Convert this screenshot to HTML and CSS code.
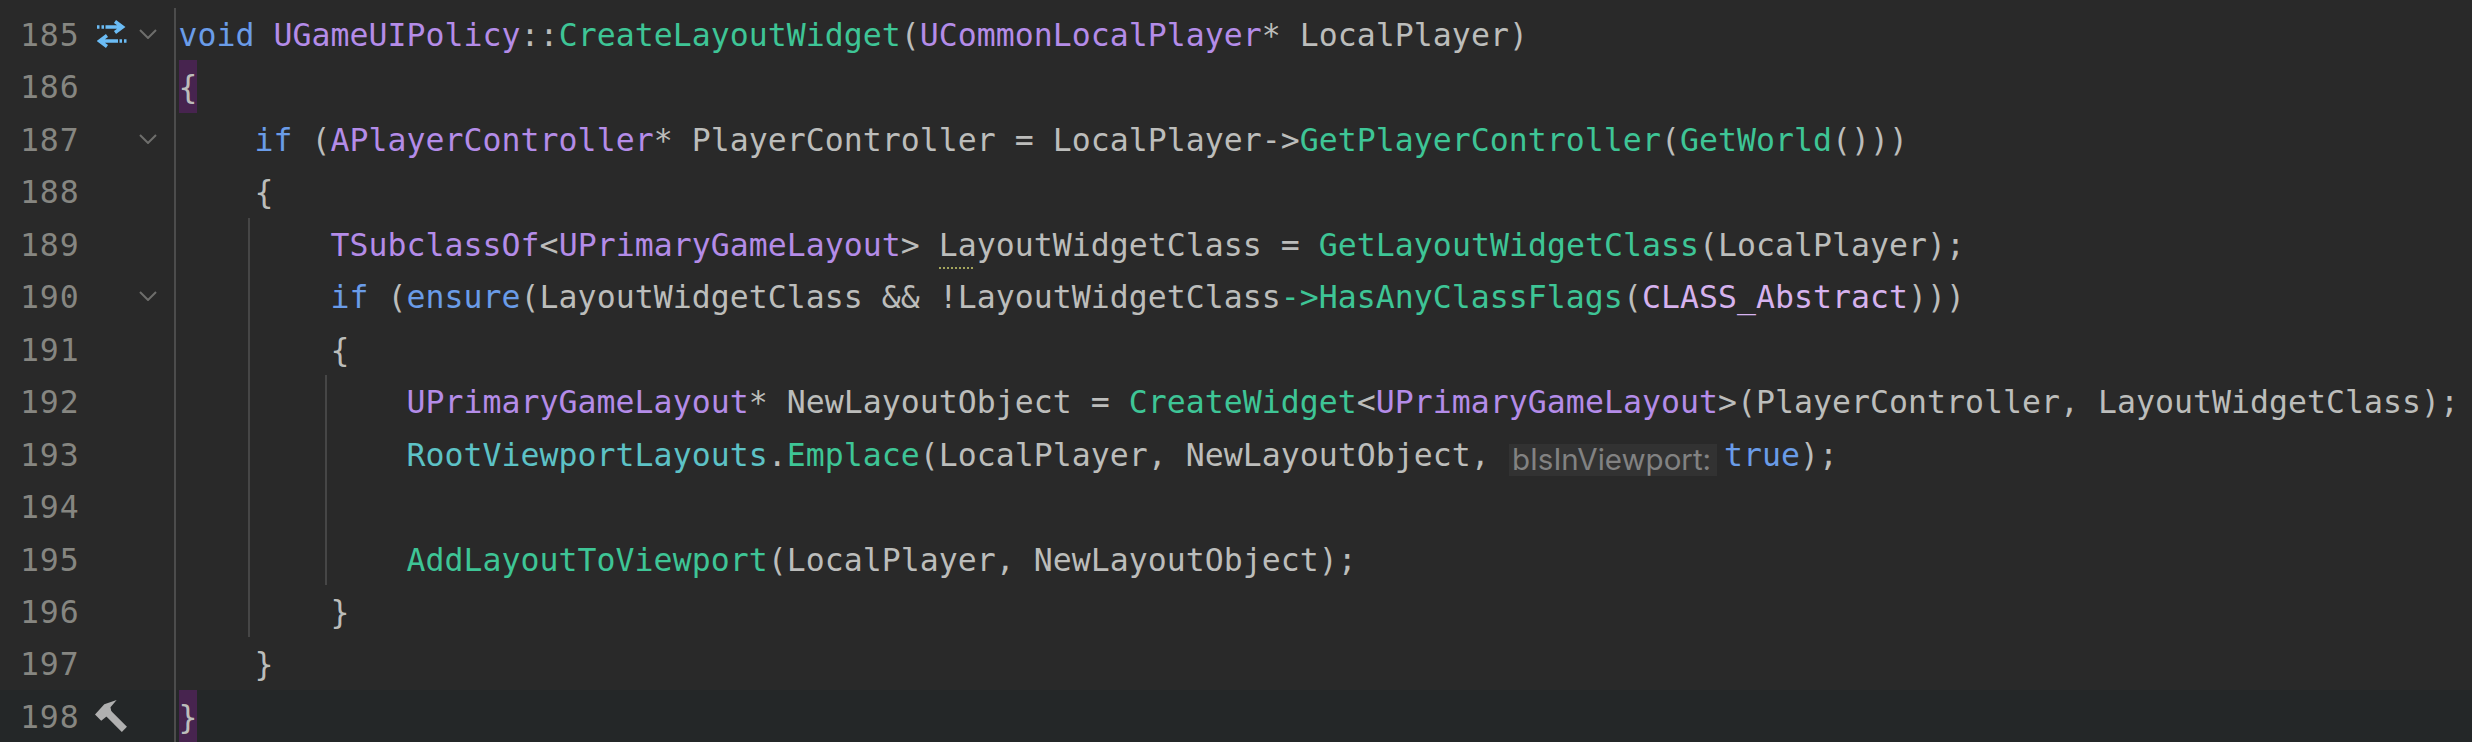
FILE: index.html
```html
<!DOCTYPE html>
<html lang="en">
<head>
<meta charset="utf-8">
<title>UGameUIPolicy</title>
<link rel="stylesheet" href="styles.css">
</head>
<body>
<main class="editor">
  <div class="row">
    <div class="gutter"><span class="num">185</span>
      <span class="mark"><svg class="mark-svg" viewBox="0 0 30 28"><path class="arrow" d="M0 7h2.500M4.500 7h2.500M8.500 7H25M18 1.500l7.500 5.500-7.500 5.500"/><path class="arrow" d="M29.500 21h-2.500M25 21h-2.500M21 21H3M10 15.500l-7.500 5.500 7.500 5.500"/></svg></span>
      <span class="fold"><svg class="fold-svg" viewBox="0 0 18 10"><path class="chev" d="M1 1l8 8 8-8"/></svg></span></div>
    <div class="code"><span class="kw">void</span> <span class="cl">UGameUIPolicy</span>::<span class="fn">CreateLayoutWidget</span>(<span class="cl">UCommonLocalPlayer</span>* LocalPlayer)</div>
  </div>
  <div class="row">
    <div class="gutter"><span class="num">186</span><span class="mark"></span><span class="fold"></span></div>
    <div class="code"><span class="hl">{</span></div>
  </div>
  <div class="row">
    <div class="gutter"><span class="num">187</span><span class="mark"></span>
      <span class="fold"><svg class="fold-svg" viewBox="0 0 18 10"><path class="chev" d="M1 1l8 8 8-8"/></svg></span></div>
    <div class="code">    <span class="kw">if</span> (<span class="cl">APlayerController</span>* PlayerController = LocalPlayer-&gt;<span class="fn">GetPlayerController</span>(<span class="fn">GetWorld</span>()))</div>
  </div>
  <div class="row">
    <div class="gutter"><span class="num">188</span><span class="mark"></span><span class="fold"></span></div>
    <div class="code">    {</div>
  </div>
  <div class="row">
    <div class="gutter"><span class="num">189</span><span class="mark"></span><span class="fold"></span></div>
    <div class="code g1">        <span class="cl">TSubclassOf</span>&lt;<span class="cl">UPrimaryGameLayout</span>&gt; <span class="weak">La</span>youtWidgetClass = <span class="fn">GetLayoutWidgetClass</span>(LocalPlayer);</div>
  </div>
  <div class="row">
    <div class="gutter"><span class="num">190</span><span class="mark"></span>
      <span class="fold"><svg class="fold-svg" viewBox="0 0 18 10"><path class="chev" d="M1 1l8 8 8-8"/></svg></span></div>
    <div class="code g1">        <span class="kw">if</span> (<span class="kw">ensure</span>(LayoutWidgetClass &amp;&amp; !LayoutWidgetClass<span class="fn">-&gt;HasAnyClassFlags</span>(<span class="mc">CLASS_Abstract</span>)))</div>
  </div>
  <div class="row">
    <div class="gutter"><span class="num">191</span><span class="mark"></span><span class="fold"></span></div>
    <div class="code g1">        {</div>
  </div>
  <div class="row">
    <div class="gutter"><span class="num">192</span><span class="mark"></span><span class="fold"></span></div>
    <div class="code g2">            <span class="cl">UPrimaryGameLayout</span>* NewLayoutObject = <span class="fn">CreateWidget</span>&lt;<span class="cl">UPrimaryGameLayout</span>&gt;(PlayerController, LayoutWidgetClass);</div>
  </div>
  <div class="row">
    <div class="gutter"><span class="num">193</span><span class="mark"></span><span class="fold"></span></div>
    <div class="code g2">            <span class="fd">RootViewportLayouts</span>.<span class="fn">Emplace</span>(LocalPlayer, NewLayoutObject, <span class="hint">bIsInViewport:</span><span class="kw">true</span>);</div>
  </div>
  <div class="row">
    <div class="gutter"><span class="num">194</span><span class="mark"></span><span class="fold"></span></div>
    <div class="code g2"></div>
  </div>
  <div class="row">
    <div class="gutter"><span class="num">195</span><span class="mark"></span><span class="fold"></span></div>
    <div class="code g2">            <span class="fn">AddLayoutToViewport</span>(LocalPlayer, NewLayoutObject);</div>
  </div>
  <div class="row">
    <div class="gutter"><span class="num">196</span><span class="mark"></span><span class="fold"></span></div>
    <div class="code g1">        }</div>
  </div>
  <div class="row">
    <div class="gutter"><span class="num">197</span><span class="mark"></span><span class="fold"></span></div>
    <div class="code">    }</div>
  </div>
  <div class="row current">
    <div class="gutter"><span class="num">198</span>
      <span class="mark"><svg class="hammer" viewBox="0 0 32 32"><path class="hammer-head" d="M0 14L9 4L21 0L15 7L16 12L6 20Z"/><path class="hammer-handle" d="M13 13L28.500 28.500"/></svg></span>
      <span class="fold"></span></div>
    <div class="code"><span class="hl">}</span></div>
  </div>
</main>
</body>
</html>
```
FILE: styles.css
```css
* {
  box-sizing: border-box;
}

html,
body {
  margin: 0;
  height: 100%;
  background: #292929;
  overflow: hidden;
}

.editor {
  padding-top: 8px;
  height: 742px;
  font-family: "DejaVu Sans Mono", "Liberation Mono", monospace;
  font-size: 31.5px;
  letter-spacing: 0.04px;
  color: #bcbdbb;
}

.row {
  display: flex;
  height: 52.46px;
  line-height: 52.46px;
}

.row.current {
  background: #242728;
}

.gutter {
  display: flex;
  align-items: center;
  flex: none;
  width: 176px;
  padding-left: 20px;
  border-right: 2px solid #4c4c4c;
}

.num {
  width: 60px;
  padding-top: 2px;
  color: #868681;
  letter-spacing: 0.9px;
}

.mark {
  display: flex;
  width: 30px;
  margin-left: 16px;
  margin-right: 13px;
}

.mark-svg {
  flex: none;
  width: 30px;
  height: 28px;
  margin-left: 1px;
}

.arrow {
  fill: none;
  stroke: #6bbcf5;
  stroke-width: 3.5;
}

.fold {
  display: flex;
  width: 18px;
}

.fold-svg {
  width: 18px;
  height: 10px;
}

.chev {
  fill: none;
  stroke: #6e6e6c;
  stroke-width: 2;
}

.hammer {
  flex: none;
  width: 33px;
  height: 33px;
  margin-left: -1px;
}

.hammer-head {
  fill: #b0b0b0;
}

.hammer-handle {
  stroke: #b0b0b0;
  stroke-width: 7;
}

.code {
  flex: 1;
  padding-left: 2.5px;
  line-height: 54.46px;
  white-space: pre;
  background-repeat: no-repeat;
}

.g1 {
  background-image: linear-gradient(#464646, #464646);
  background-position: 72px 0;
  background-size: 2px 100%;
}

.g2 {
  background-image: linear-gradient(#464646, #464646), linear-gradient(#464646, #464646);
  background-position: 72px 0, 149px 0;
  background-size: 2px 100%, 2px 100%;
}

.kw {
  color: #6a9ce8;
}

.cl {
  color: #b48ce8;
}

.fn {
  color: #3ec596;
}

.fd {
  color: #5dc2c6;
}

.mc {
  color: #d6b2ee;
}

.hl {
  display: block;
  width: 18px;
  height: 52.46px;
  background: #47244f;
}

.weak {
  position: relative;
}

.weak::after {
  content: "";
  position: absolute;
  left: 0;
  right: 4px;
  bottom: -6px;
  border-bottom: 2px dotted #a3a45c;
}

.hint {
  display: inline-block;
  width: 208px;
  height: 32px;
  margin-right: 7px;
  padding-left: 3px;
  font-family: "Inter", "Liberation Sans", sans-serif;
  font-size: 29.5px;
  letter-spacing: 0;
  line-height: 31px;
  color: #828282;
  background: #323232;
  vertical-align: -4px;
}
```
